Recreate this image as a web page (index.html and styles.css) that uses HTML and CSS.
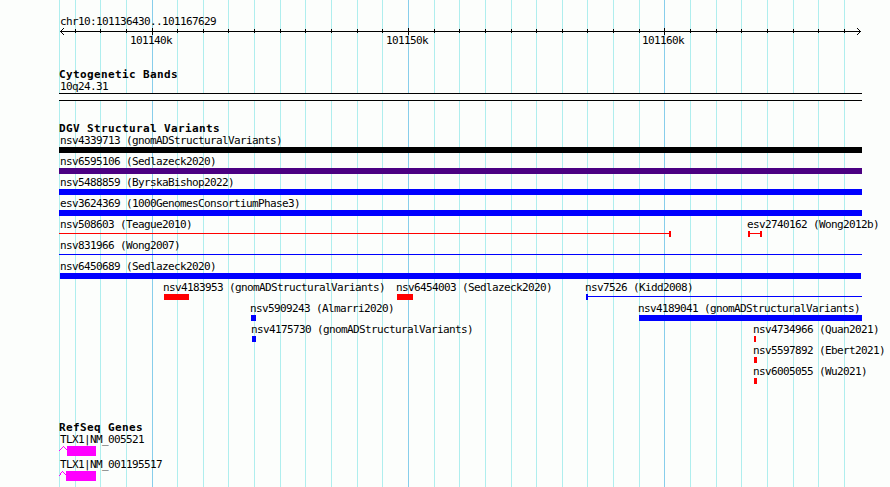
FILE: index.html
```
<!DOCTYPE html>
<html lang="en">
<head>
<meta charset="utf-8">
<title>Genome browser</title>
<link rel="stylesheet" href="styles.css">
</head>
<body>
<main class="browser">
<svg class="gridlines" width="890" height="487" shape-rendering="crispEdges" aria-hidden="true">
<path class="minor" d="M59.5 0V487M75.5 0V487M100.5 0V487M126.5 0V487M177.5 0V487M203.5 0V487M228.5 0V487M254.5 0V487M280.5 0V487M305.5 0V487M331.5 0V487M357.5 0V487M382.5 0V487M434.5 0V487M459.5 0V487M485.5 0V487M511.5 0V487M536.5 0V487M562.5 0V487M587.5 0V487M613.5 0V487M639.5 0V487M690.5 0V487M716.5 0V487M741.5 0V487M767.5 0V487M793.5 0V487M818.5 0V487M844.5 0V487"/>
<path class="major" d="M152.5 0V487M408.5 0V487M664.5 0V487"/>
</svg>
<section class="ruler">
<div class="label">chr10:101136430..101167629</div>
<svg class="scale" width="831" height="8" shape-rendering="crispEdges" aria-hidden="true">
<path d="M1 3.5H802M16.5 1V5M41.5 1V5M67.5 1V5M93.5 0V7M118.5 1V5M144.5 1V5M169.5 1V5M195.5 1V5M221.5 1V5M246.5 1V5M272.5 1V5M298.5 1V5M323.5 1V5M349.5 0V7M375.5 1V5M400.5 1V5M426.5 1V5M452.5 1V5M477.5 1V5M503.5 1V5M528.5 1V5M554.5 1V5M580.5 1V5M605.5 0V7M631.5 1V5M657.5 1V5M682.5 1V5M708.5 1V5M734.5 1V5M759.5 1V5M785.5 1V5"/>
<path d="M2 2.5H3M3 1.5H4M4 .5H5M2 4.5H3M3 5.5H4M4 6.5H5M800 2.5H801M799 1.5H800M798 .5H799M800 4.5H801M799 5.5H800M798 6.5H799"/>
</svg>
<div class="lane ticks"><span class="feature t1">101140k</span><span class="feature t2">101150k</span><span class="feature t3">101160k</span></div>
</section>
<section class="bands"><h2>Cytogenetic Bands</h2><div class="label">10q24.31</div><div class="band"></div></section>
<section class="variants"><h2>DGV Structural Variants</h2>
<div class="lane"><div class="feature" style="--x:0px;--w:803px">nsv4339713 (gnomADStructuralVariants)<i class="bar black"></i></div></div>
<div class="lane"><div class="feature" style="--x:0px;--w:803px">nsv6595106 (Sedlazeck2020)<i class="bar purple"></i></div></div>
<div class="lane"><div class="feature" style="--x:0px;--w:803px">nsv5488859 (ByrskaBishop2022)<i class="bar blue"></i></div></div>
<div class="lane"><div class="feature" style="--x:0px;--w:803px">esv3624369 (1000GenomesConsortiumPhase3)<i class="bar blue"></i></div></div>
<div class="lane"><div class="feature" style="--x:0px;--w:612px">nsv508603 (Teague2010)<i class="span red end"></i></div><div class="feature" style="--x:689px;--w:14px;--dx:-2px">esv2740162 (Wong2012b)<i class="span red start end"></i></div></div>
<div class="lane"><div class="feature" style="--x:0px;--w:803px">nsv831966 (Wong2007)<i class="span blue"></i></div></div>
<div class="lane"><div class="feature" style="--x:1px;--w:801px;--dx:-1px">nsv6450689 (Sedlazeck2020)<i class="bar blue"></i></div></div>
<div class="lane"><div class="feature" style="--x:105px;--w:25px;--dx:-2px">nsv4183953 (gnomADStructuralVariants)<i class="bar red"></i></div><div class="feature" style="--x:338px;--w:16px;--dx:-2px">nsv6454003 (Sedlazeck2020)<i class="bar red"></i></div><div class="feature" style="--x:527px;--w:276px;--dx:-2px">nsv7526 (Kidd2008)<i class="span blue start"></i></div></div>
<div class="lane"><div class="feature" style="--x:192px;--w:5px;--dx:-2px">nsv5909243 (Almarri2020)<i class="bar blue"></i></div><div class="feature" style="--x:580px;--w:223px;--dx:-2px">nsv4189041 (gnomADStructuralVariants)<i class="bar blue"></i></div></div>
<div class="lane"><div class="feature" style="--x:193px;--w:4px;--dx:-2px">nsv4175730 (gnomADStructuralVariants)<i class="bar blue"></i></div><div class="feature" style="--x:695px;--w:2px;--dx:-2px">nsv4734966 (Quan2021)<i class="bar red"></i></div></div>
<div class="lane"><div class="feature" style="--x:695px;--w:3px;--dx:-2px">nsv5597892 (Ebert2021)<i class="bar red"></i></div></div>
<div class="lane"><div class="feature" style="--x:695px;--w:3px;--dx:-2px">nsv6005055 (Wu2021)<i class="bar red"></i></div></div>
</section>
<section class="genes"><h2>RefSeq Genes</h2>
<div class="label gene">TLX1|NM_005521<svg width="38" height="10" shape-rendering="crispEdges"><path class="intron" d="M0 4.5H1M1 3.5H2M2 2.5H3M3 1.5H4M4 .5H5M5 1.5H6M6 2.5H7M7 3.5H8"/><rect x="8" width="29" height="10"/></svg></div>
<div class="label gene">TLX1|NM_001195517<svg width="38" height="10" shape-rendering="crispEdges"><path class="intron" d="M0 4.5H1M1 3.5H2M1 2.5H2M2 1.5H3M3 .5H4M4 1.5H5M5 2.5H6M6 3.5H7"/><rect x="7" width="30" height="10"/></svg></div>
</section>
</main>
</body>
</html>
```
FILE: styles.css
```
* { box-sizing: border-box; }
body { margin: 0; background: #fcfefc; }
.browser {
  position: relative;
  width: 890px;
  height: 487px;
  overflow: hidden;
  padding: 15px 0 0 59px;
  color: #000;
  font: 11px/14px "DejaVu Sans Mono", monospace;
  letter-spacing: -0.622px;
  white-space: nowrap;
}
.gridlines { position: absolute; inset: 0; }
.gridlines path { fill: none; stroke: #afeeee; }
.gridlines .major { stroke: #87ceeb; }
section { position: relative; }
.label { padding-left: 1px; }
.ruler { height: 53px; }
.scale { display: block; margin-top: -1px; }
.scale path { fill: none; stroke: #000; }
.lane { display: grid; height: 21px; }
.ticks { height: 12px; margin-top: -2px; }
.t1 { --x: 70px; }
.t2 { --x: 326px; }
.t3 { --x: 582px; }
h2 { height: 12px; margin: 0; font: bold 11px/14px "DejaVu Sans Mono", monospace; letter-spacing: 0.378px; }
.bands { height: 54px; }
.band { width: 803px; height: 8px; margin-top: -1px; border: solid #000; border-width: 1px 0; background: #fcfefc; }
.variants { height: 299px; }
.feature { grid-area: 1 / 1; margin-left: var(--x); text-indent: calc(1px + var(--dx, 0px)); }
.bar { display: block; width: var(--w); height: 6px; margin-top: -1px; background: var(--c); }
.span {
  display: block;
  width: var(--w);
  height: 6px;
  margin-top: -1px;
  background: linear-gradient(var(--c), var(--c)) 0 2px / 100% 1px no-repeat;
}
.start { border-left: 2px solid var(--c); }
.end { border-right: 2px solid var(--c); }
.black { --c: #000; }
.purple { --c: #4b0082; }
.blue { --c: #00f; }
.red { --c: #f00; }
.gene { height: 25px; }
.gene svg { display: block; margin: -1px 0 0 -1px; }
.gene rect { fill: #f0f; }
.intron { fill: none; stroke: #f0f; }
```
